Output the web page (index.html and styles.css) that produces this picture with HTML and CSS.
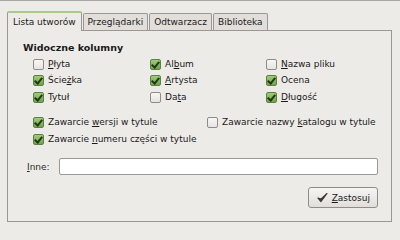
FILE: index.html
```html
<!DOCTYPE html>
<html lang="pl">
<head>
<meta charset="utf-8">
<link rel="stylesheet" href="styles.css">
</head>
<body>
<div class="window">
  <div class="notebook">
    <div class="tabs">
      <div class="tab active">Lista utworów</div>
      <div class="tab">Przeglądarki</div>
      <div class="tab">Odtwarzacz</div>
      <div class="tab">Biblioteka</div>
    </div>
    <div class="panel">
      <div class="heading">Widoczne kolumny</div>
      <div class="grid">
        <label class="chk"><span class="box"></span><span><u>P</u>łyta</span></label>
        <label class="chk"><span class="box on"></span><span>Al<u>b</u>um</span></label>
        <label class="chk"><span class="box"></span><span><u>N</u>azwa pliku</span></label>
        <label class="chk"><span class="box on"></span><span>Ście<u>ż</u>ka</span></label>
        <label class="chk"><span class="box on"></span><span><u>A</u>rtysta</span></label>
        <label class="chk"><span class="box on"></span><span>Ocena</span></label>
        <label class="chk"><span class="box on"></span><span>Tytuł</span></label>
        <label class="chk"><span class="box"></span><span>Da<u>t</u>a</span></label>
        <label class="chk"><span class="box on"></span><span><u>D</u>ługość</span></label>
      </div>
      <div class="opts">
        <label class="chk"><span class="box on"></span><span>Zawarcie <u>w</u>ersji w tytule</span></label>
        <label class="chk"><span class="box"></span><span>Zawarcie nazwy <u>k</u>atalogu w tytule</span></label>
        <label class="chk"><span class="box on"></span><span>Zawarcie <u>n</u>umeru części w tytule</span></label>
      </div>
      <div class="entry-row">
        <span class="lbl"><u>I</u>nne:</span>
        <div class="entry"></div>
      </div>
      <div class="btn-row">
        <div class="btn">
          <svg class="tick" width="11" height="11" viewBox="0 0 11 11"><path d="M1 6 L4 9.5 L10 1.5 L4.2 7 Z" fill="#3a3a3a" stroke="#3a3a3a" stroke-width="1.2" stroke-linejoin="round"/></svg>
          <span><u>Z</u>astosuj</span>
        </div>
      </div>
    </div>
  </div>
</div>
</body>
</html>
```
FILE: styles.css
```css
html, body {
  margin: 0;
  padding: 0;
}
body {
  width: 400px;
  height: 233px;
  background: #edebe8;
  font-family: "DejaVu Sans", sans-serif;
  font-size: 9px;
  color: #1a1a1a;
  overflow: hidden;
}
.window {
  border-top: 1px solid #a9a7a4;
  height: 232px;
  box-sizing: border-box;
  padding: 9px 0 0 7px;
}
.notebook {
  width: 385px;
}
.tabs {
  display: flex;
  align-items: flex-end;
  height: 20px;
}
.tab {
  height: 16px;
  line-height: 16px;
  padding: 0 4px;
  border: 1px solid #9a9896;
  border-bottom: none;
  border-radius: 2px 2px 0 0;
  background: #e2dfdb;
  margin-right: 1px;
  box-sizing: content-box;
}
.tab.active {
  padding: 0 5px;
  background: #edebe8;
  border-top: 2px solid #a8c98a;
  height: 18px;
  line-height: 18px;
  position: relative;
  z-index: 1;
  margin-bottom: -1px;
}
.panel {
  border: 1px solid #9a9896;
  height: 190px;
  padding: 0 13px 0 15px;
  box-sizing: content-box;
  background: #edebe8;
}
.heading {
  font-weight: bold;
  font-size: 9.5px;
  margin-top: 10px;
  height: 13px;
  line-height: 13px;
}
.grid {
  display: grid;
  grid-template-columns: 117px 116px 1fr;
  row-gap: 3.5px;
  margin-top: 3.5px;
  padding-left: 10px;
}
.chk {
  display: flex;
  align-items: center;
  gap: 4px;
  height: 13px;
  line-height: 13px;
  white-space: nowrap;
}
.box {
  width: 9px;
  height: 9px;
  border: 1px solid #8e8c8a;
  border-radius: 2px;
  background: linear-gradient(#f8f7f6, #e6e4e1);
  position: relative;
  flex: none;
}
.box.on {
  background: linear-gradient(#9fcc77, #6fa449);
  border-color: #5e7f45;
}
.box.on::after {
  content: "";
  position: absolute;
  left: 2px;
  top: 0px;
  width: 3px;
  height: 6px;
  border-right: 2px solid #233818;
  border-bottom: 2px solid #233818;
  transform: rotate(40deg);
}
u {
  text-decoration: underline;
  text-underline-offset: 1px;
}
.opts {
  display: grid;
  grid-template-columns: 174px 1fr;
  row-gap: 4px;
  margin-top: 12px;
  padding-left: 10px;
}
.entry-row {
  display: flex;
  align-items: center;
  margin-top: 12.5px;
  padding-left: 4px;
}
.lbl {
  width: 32px;
  color: #2a2a2a;
}
.entry {
  flex: 1;
  height: 15px;
  background: #ffffff;
  border: 1px solid #9a9896;
  border-radius: 2px;
}
.btn-row {
  display: flex;
  justify-content: flex-end;
  margin-top: 12px;
}
.btn {
  display: flex;
  align-items: center;
  gap: 4px;
  height: 19px;
  padding: 0 7px 0 8px;
  border: 1px solid #8f8d8a;
  border-radius: 3px;
  background: linear-gradient(#f6f5f3, #e1deda);
}
.tick {
  flex: none;
}
```
